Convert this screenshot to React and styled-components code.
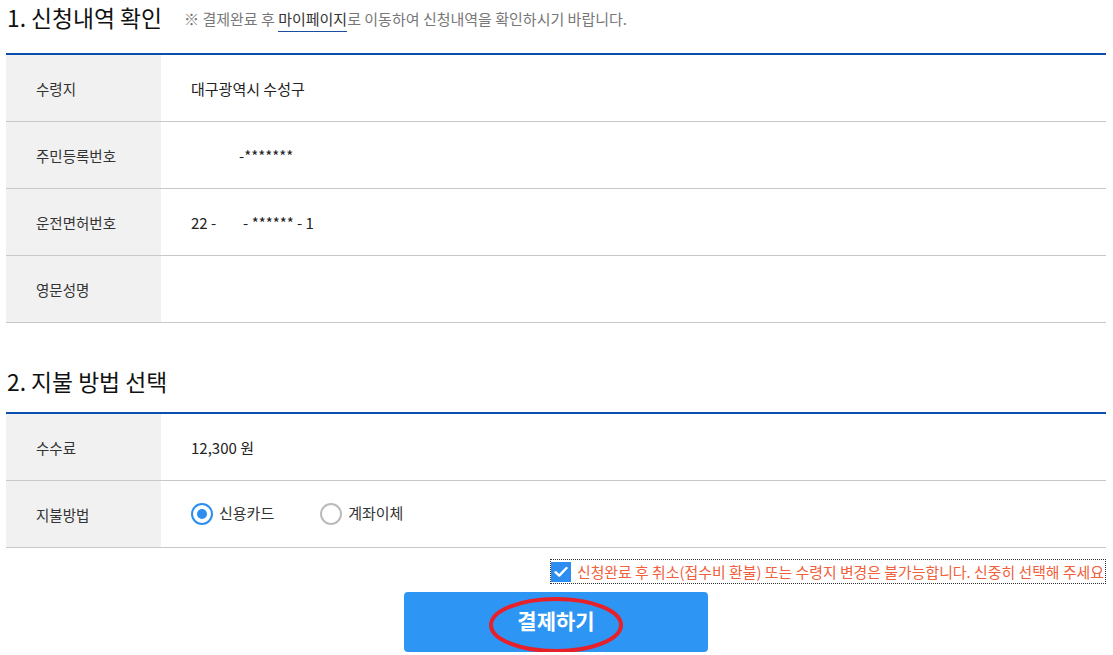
import React from 'react'
import styled, { createGlobalStyle } from 'styled-components'

const GlobalStyle = createGlobalStyle`
  body {
    margin: 0;
    background: #fff;
    font-family: 'Noto Sans CJK KR', 'Noto Sans', sans-serif;
    color: #222;
  }
`

const App = () => (
  <Page>
    <GlobalStyle />
    <Header>
      <Title>1. 신청내역 확인</Title>
      <Note>
        ※ 결제완료 후 <MyPage>마이페이지</MyPage>로 이동하여 신청내역을 확인하시기 바랍니다.
      </Note>
    </Header>
    <Table>
      <Row>
        <Label>수령지</Label>
        <Value>대구광역시 수성구</Value>
      </Row>
      <Row>
        <Label>주민등록번호</Label>
        <Value indent={48}>-*******</Value>
      </Row>
      <Row>
        <Label>운전면허번호</Label>
        <Value>22 - &nbsp;&nbsp;&nbsp;&nbsp;&nbsp;&nbsp;&nbsp;- ****** - 1</Value>
      </Row>
      <Row>
        <Label>영문성명</Label>
        <Value />
      </Row>
    </Table>

    <Header second>
      <Title>2. 지불 방법 선택</Title>
    </Header>
    <Table>
      <Row>
        <Label>수수료</Label>
        <Value>12,300 원</Value>
      </Row>
      <Row>
        <Label>지불방법</Label>
        <Value>
          <Radios>
            <RadioOption>
              <Radio checked />
              신용카드
            </RadioOption>
            <RadioOption>
              <Radio />
              계좌이체
            </RadioOption>
          </Radios>
        </Value>
      </Row>
    </Table>

    <AgreeRow>
      <Agree>
        <CheckBox>
          <svg width='14' height='12' viewBox='0 0 14 12'>
            <path d='M1.5 6.2 L5.2 9.6 L12.5 2' fill='none' stroke='#fff' strokeWidth='2.4' strokeLinecap='round' strokeLinejoin='round' />
          </svg>
        </CheckBox>
        신청완료 후 취소(접수비 환불) 또는 수령지 변경은 불가능합니다. 신중히 선택해 주세요
      </Agree>
    </AgreeRow>

    <ButtonRow>
      <PayButton>
        결제하기
        <Circle width='140' height='60' viewBox='0 0 140 60'>
          <ellipse cx='70' cy='30' rx='65' ry='26' fill='none' stroke='#e8202a' strokeWidth='4' />
        </Circle>
      </PayButton>
    </ButtonRow>
  </Page>
)

const Page = styled.div`
  width: 1100px;
  padding-left: 6px;
`

const Header = styled.div`
  display: flex;
  align-items: center;
  height: 35px;
  margin-top: ${p => (p.second ? '41px' : '0')};
  margin-bottom: ${p => (p.second ? '13px' : '18px')};
`

const Title = styled.h2`
  margin: 0 0 0 1px;
  font-size: 22.8px;
  font-weight: 400;
  color: #111;
`

const Note = styled.span`
  margin-left: 22px;
  margin-top: 1px;
  font-size: 15px;
  color: #777;
`

const MyPage = styled.span`
  color: #333;
  border-bottom: 1px solid #1a4fa0;
  padding-bottom: 2px;
`

const Table = styled.div`
  border-top: 2px solid #0b4fae;
`

const Row = styled.div`
  display: flex;
  height: 66px;
  border-bottom: 1px solid #c8c8c8;
`

const Label = styled.div`
  width: 125px;
  padding-left: 30px;
  background: #f1f1f1;
  display: flex;
  align-items: center;
  font-size: 14.5px;
  color: #333;
`

const Value = styled.div`
  flex: 1;
  display: flex;
  align-items: center;
  padding-left: ${p => 30 + (p.indent || 0)}px;
  font-size: 15px;
  color: #222;
`

const Radios = styled.div`
  display: flex;
  gap: 46px;
  margin-top: -4px;
`

const RadioOption = styled.label`
  display: flex;
  align-items: center;
  gap: 6px;
  font-size: 15px;
  color: #333;
`

const Radio = styled.span`
  box-sizing: border-box;
  width: 22px;
  height: 22px;
  border-radius: 50%;
  border: 2px solid ${p => (p.checked ? '#2b8ef0' : '#bbb')};
  display: flex;
  align-items: center;
  justify-content: center;
  margin-top: 4px;

  &::after {
    content: '';
    display: ${p => (p.checked ? 'block' : 'none')};
    width: 10px;
    height: 10px;
    border-radius: 50%;
    background: #2b8ef0;
  }
`

const AgreeRow = styled.div`
  display: flex;
  justify-content: flex-end;
  margin-top: 11px;
`

const Agree = styled.label`
  display: flex;
  align-items: center;
  gap: 6px;
  height: 23px;
  border: 1px dotted #333;
  padding-right: 1px;
  font-size: 14.9px;
  color: #f0603c;
  white-space: nowrap;
`

const CheckBox = styled.span`
  width: 20px;
  height: 20px;
  background: #2b8ef0;
  display: flex;
  align-items: center;
  justify-content: center;
`

const ButtonRow = styled.div`
  display: flex;
  justify-content: center;
  margin-top: 8px;
`

const PayButton = styled.button`
  position: relative;
  width: 304px;
  height: 60px;
  border: none;
  border-radius: 4px;
  background: #2d96f5;
  color: #fff;
  font-family: 'Noto Sans CJK KR', sans-serif;
  font-size: 21px;
  font-weight: 700;
  padding: 0 0 4px;
`

const Circle = styled.svg`
  position: absolute;
  left: 82px;
  top: 3px;
  pointer-events: none;
`

export default App
